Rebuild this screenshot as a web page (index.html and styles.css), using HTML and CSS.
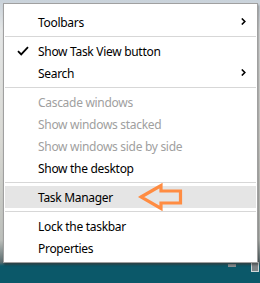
FILE: index.html
```html
<!DOCTYPE html>
<html lang="en">
<head>
    <meta charset="UTF-8">
    <meta name="viewport" content="width=device-width, initial-scale=1.0">
    <title>Taskbar menu</title>
    <link rel="stylesheet" href="styles.css">
</head>
<body>
    <div class="desktop">
        <div class="menu">
            <div class="item">
                <span class="label">Toolbars</span>
                <svg class="sub" width="5" height="7" viewBox="0 0 5 7"><path d="M0.8 0.5 L3.8 3.5 L0.8 6.5" fill="none" stroke="#000" stroke-width="1.6"/></svg>
            </div>
            <div class="sep"></div>
            <div class="item">
                <svg class="check" width="12" height="10" viewBox="0 0 12 10"><path d="M1 5.2 L4.2 8.4 L11 1.2" fill="none" stroke="#000" stroke-width="1.8"/></svg>
                <span class="label">Show Task View button</span>
            </div>
            <div class="item">
                <span class="label">Search</span>
                <svg class="sub" width="5" height="7" viewBox="0 0 5 7"><path d="M0.8 0.5 L3.8 3.5 L0.8 6.5" fill="none" stroke="#000" stroke-width="1.6"/></svg>
            </div>
            <div class="sep"></div>
            <div class="item disabled"><span class="label">Cascade windows</span></div>
            <div class="item disabled"><span class="label">Show windows stacked</span></div>
            <div class="item disabled"><span class="label">Show windows side by side</span></div>
            <div class="item"><span class="label">Show the desktop</span></div>
            <div class="sep"></div>
            <div class="item hover">
                <span class="label">Task Manager</span>
                <!-- arrow pointing at the item -->
                <svg class="pointer" width="46" height="28" viewBox="0 0 46 28">
                    <path d="M3 14 L23 2.5 L23 8 L42.5 8 L42.5 20 L23 20 L23 25.5 Z" fill="none" stroke="#ff8c42" stroke-width="3.2" stroke-linejoin="miter"/>
                </svg>
            </div>
            <div class="sep"></div>
            <div class="item"><span class="label">Lock the taskbar</span></div>
            <div class="item"><span class="label">Properties</span></div>
        </div>
        <div class="taskbar">
            <span class="tray-icon"></span>
            <span class="tray-box"></span>
        </div>
    </div>
</body>
</html>
```

FILE: styles.css
```css
* {
    box-sizing: border-box;
    margin: 0;
    padding: 0;
}

body {
    width: 260px;
    height: 283px;
    overflow: hidden;
    font-family: "Noto Sans", "Open Sans", Arial, sans-serif;
    font-size: 12px;
    letter-spacing: -0.3px;
    background: linear-gradient(to bottom, #c9d2da 0, #e4e6e6 30px, #d9d9d4 140px, #bcbfbb 240px, #5c6d70 262px, #0b5869 266px, #0b5869 100%);
}

.desktop {
    position: relative;
    padding: 3px 0 0 3px;
    height: 283px;
}

.menu {
    position: relative;
    z-index: 1;
    width: 255px;
    background: #fff;
    border: 1px solid #a0a0a0;
    padding: 7px 1px 3px;
    box-shadow: 1px 2px 2px rgba(0, 0, 0, 0.35);
}

.item {
    position: relative;
    height: 22px;
    display: flex;
    align-items: center;
    padding-left: 33px;
    color: #000;
    white-space: nowrap;
}

.item.disabled {
    color: #a0a0a0;
}

.item.hover {
    background: #e5e5e5;
}

.label {
    flex: 1;
    line-height: 22px;
    padding-top: 1px;
}

.sub {
    margin-right: 10px;
    margin-top: -1px;
}

.check {
    position: absolute;
    left: 12px;
    top: 6px;
}

.pointer {
    position: absolute;
    left: 133px;
    top: -3px;
}

.sep {
    height: 1px;
    margin: 3px 0;
    background: #d7d7d7;
}

.taskbar {
    position: absolute;
    left: 0;
    right: 0;
    top: 262px;
    height: 21px;
}

.tray-icon {
    position: absolute;
    left: 228px;
    top: 2px;
    width: 8px;
    height: 3px;
    background: #8a8f92;
}

.tray-box {
    position: absolute;
    left: 251px;
    top: 0;
    width: 8px;
    height: 10px;
    background: #7d8487;
    border: 1px solid #cfd6d8;
    border-top: none;
}
```
